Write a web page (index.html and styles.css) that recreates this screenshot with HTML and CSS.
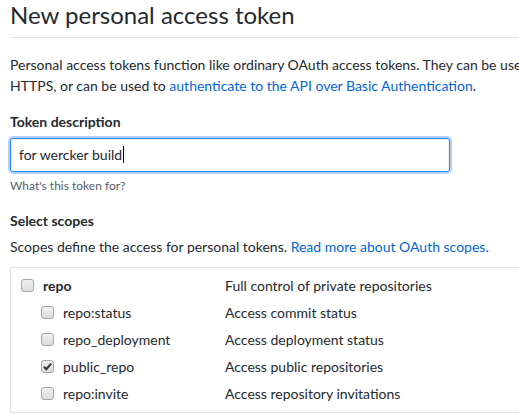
FILE: index.html
```html
<!DOCTYPE html>
<html>
<head>
<meta charset="utf-8">
<link rel="stylesheet" href="styles.css">
</head>
<body>
<div class="page">
  <div class="subhead">
    <h1 class="subhead-heading">New personal access token</h1>
  </div>
  <p class="intro">Personal access tokens function like ordinary OAuth access tokens. They can be used instead of a password for Git over<br>HTTPS, or can be used to <a href="#">authenticate to the API over Basic Authentication</a>.</p>

  <div class="form-group">
    <label class="label">Token description</label>
    <div class="input-wrap"><span class="input">for wercker build<span class="caret"></span></span></div>
    <p class="note">What's this token for?</p>
  </div>

  <div class="form-group scopes-group">
    <div class="label">Select scopes</div>
    <p class="scopes-desc">Scopes define the access for personal tokens. <a href="#">Read more about OAuth scopes.</a></p>
    <div class="scope-box">
      <div class="row parent">
        <span class="name"><span class="cb"></span><b>repo</b></span>
        <span class="desc">Full control of private repositories</span>
      </div>
      <div class="row child">
        <span class="name"><span class="cb"></span>repo:status</span>
        <span class="desc">Access commit status</span>
      </div>
      <div class="row child">
        <span class="name"><span class="cb"></span>repo_deployment</span>
        <span class="desc">Access deployment status</span>
      </div>
      <div class="row child">
        <span class="name"><span class="cb checked"><svg viewBox="0 0 13 13" width="13" height="13"><path d="M3 6.8 L5.3 9.2 L10.2 3.6" fill="none" stroke="#333" stroke-width="2"/></svg></span>public_repo</span>
        <span class="desc">Access public repositories</span>
      </div>
      <div class="row child">
        <span class="name"><span class="cb"></span>repo:invite</span>
        <span class="desc">Access repository invitations</span>
      </div>
    </div>
  </div>
</div>
</body>
</html>
```

FILE: styles.css
```css
html, body {
  margin: 0;
  padding: 0;
  overflow: hidden;
  background: #fff;
}
body {
  font-family: "Lato", "Open Sans", sans-serif;
  font-size: 14px;
  line-height: 20px;
  color: #24292e;
}
.page {
  width: 760px;
  padding-left: 10px;
}
a {
  color: #0366d6;
  text-decoration: none;
}
.subhead {
  border-bottom: 1px solid #e1e4e8;
  padding-bottom: 7px;
  margin-bottom: 16px;
}
.subhead-heading {
  margin: 0;
  font-size: 24px;
  font-weight: 400;
  line-height: 30px;
}
.intro {
  margin: 0 0 16px;
  line-height: 21px;
}
.form-group {
  margin: 0;
}
.label {
  display: block;
  font-weight: 700;
  line-height: 20px;
  margin-bottom: 6px;
}
.input-wrap {
  width: 440px;
}
.input {
  display: block;
  box-sizing: border-box;
  height: 34px;
  padding: 6px 8px;
  border: 1px solid #2188ff;
  border-radius: 3px;
  box-shadow: inset 0 1px 2px rgba(27,31,35,.075), 0 0 0 2px rgba(3,102,214,.3);
  line-height: 20px;
}
.caret {
  display: inline-block;
  width: 1px;
  height: 17px;
  background: #000;
  vertical-align: -3px;
  margin-left: 1px;
}
.note {
  margin: 5px 0 0;
  font-size: 12px;
  line-height: 18px;
  color: #586069;
}
.scopes-group {
  margin-top: 16px;
}
.scopes-group .label {
  margin-bottom: 6px;
}
.scopes-desc {
  margin: 0 0 10px;
}
.scope-box {
  border: 1px solid #e1e4e8;
  border-right: 0;
  padding: 4px 0 5px;
}
.row {
  display: flex;
  align-items: center;
  height: 27px;
}
.name {
  display: flex;
  align-items: center;
  width: 214px;
  flex: none;
}
.parent .name { padding-left: 10px; width: 204px; }
.child .name { padding-left: 30px; width: 184px; }
.cb {
  box-sizing: border-box;
  width: 13px;
  height: 13px;
  border: 1px solid #a6a6a6;
  border-radius: 3px;
  background: linear-gradient(#f0f0f0, #dcdcdc);
  margin-right: 9px;
  flex: none;
  position: relative;
}
.cb svg {
  position: absolute;
  left: -1px;
  top: -1px;
}
.parent b { font-weight: 700; }
.desc { color: #24292e; }
```
